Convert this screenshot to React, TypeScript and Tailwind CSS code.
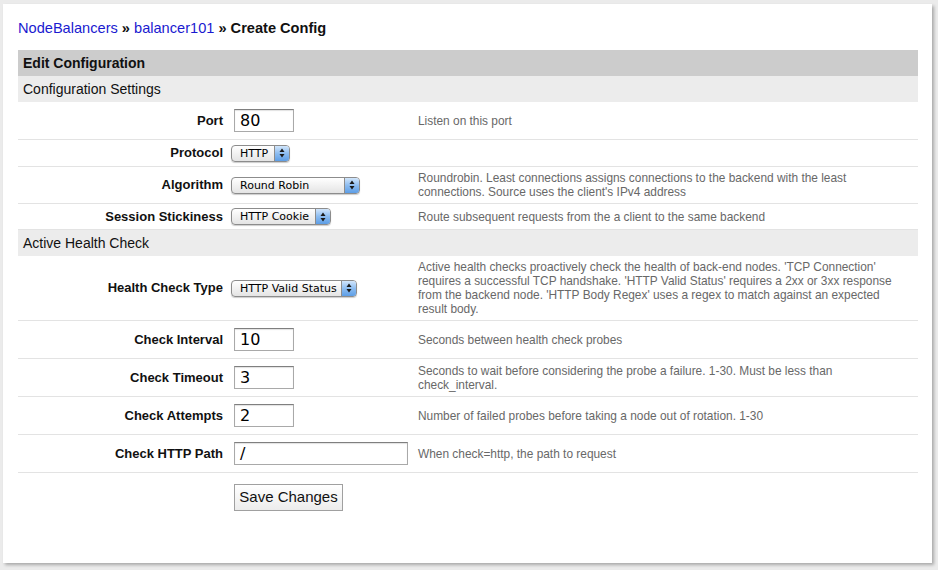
const sans = "font-['Liberation_Sans',Arial,sans-serif]";
const lucida = "font-['DejaVu_Sans','Liberation_Sans',sans-serif]";

function TextBox({ value, w }: { value: string; w: string }) {
  return (
    <div
      className={`${w} h-[23px] border border-[#a9a9a9] border-t-[#7f7f7f] bg-white pl-[5px] text-[16px] leading-[21px] text-black ${lucida} shadow-[inset_0_1px_1px_rgba(0,0,0,0.12)]`}
    >
      {value}
    </div>
  );
}

function Select({ value, w }: { value: string; w: string }) {
  return (
    <div
      className={`${w} -ml-[3px] h-[17px] flex rounded-[4px] border border-[#8c8c8c] bg-gradient-to-b from-white to-[#e4e4e4] shadow-[0_1px_1px_rgba(0,0,0,0.2)] overflow-hidden`}
    >
      <span className={`flex-1 pl-[8px] text-[11px] leading-[15px] text-black ${lucida}`}>{value}</span>
      <span className="w-[15px] border-l border-[#8c8c8c] bg-gradient-to-b from-[#d2e6fb] via-[#8cbcf0] to-[#5d9ee6] flex items-center justify-center">
        <svg width="6" height="10" viewBox="0 0 6 10">
          <path d="M3 0.5 L5.5 4 H0.5 Z" fill="#1a1a1a" />
          <path d="M3 9.5 L5.5 6 H0.5 Z" fill="#1a1a1a" />
        </svg>
      </span>
    </div>
  );
}

type RowProps = {
  label: string;
  h: string;
  field?: React.ReactNode;
  desc?: string;
};

function Row({ label, h, field, desc }: RowProps) {
  return (
    <div className={`flex items-center ${h} border-b border-[#e3e3e3]`}>
      <div className={`w-[205px] text-right text-[13px] font-bold text-[#111] ${sans}`}>{label}</div>
      <div className="w-[195px] pl-[11px] flex items-center">{field}</div>
      <div className={`flex-1 pr-[18px] text-[11.9px] leading-[14px] text-[#686868] ${sans}`}>{desc}</div>
    </div>
  );
}

function Section({ title }: { title: string }) {
  return (
    <div className={`h-[26px] flex items-center bg-[#ececec] pl-[5px] text-[14px] text-[#111] ${sans}`}>
      {title}
    </div>
  );
}

export default function App() {
  return (
    <div className="min-h-[570px] w-[938px] bg-[#ebebeb] pt-[4px] pl-[3px]">
      <div className="w-[929px] h-[559px] bg-white shadow-[2px_2px_3px_rgba(0,0,0,0.28)] pl-[15px] pr-[14px]">
        <div className={`h-[46px] pt-[15px] text-[14.6px] leading-[18px] ${sans}`}>
          <span className="text-[#1a1ad0]">NodeBalancers</span>
          <span className="font-bold text-[#111]"> » </span>
          <span className="text-[#1a1ad0]">balancer101</span>
          <span className="font-bold text-[#111]"> » Create Config</span>
        </div>

        <div className={`h-[26px] flex items-center bg-[#cccccc] pl-[5px] text-[14px] font-bold text-[#111] ${sans}`}>
          Edit Configuration
        </div>
        <Section title="Configuration Settings" />

        <Row label="Port" h="h-[38px]" field={<TextBox value="80" w="w-[60px]" />} desc="Listen on this port" />
        <Row label="Protocol" h="h-[27px]" field={<Select value="HTTP" w="w-[59px]" />} />
        <Row
          label="Algorithm"
          h="h-[37px]"
          field={<Select value="Round Robin" w="w-[129px]" />}
          desc="Roundrobin. Least connections assigns connections to the backend with the least connections. Source uses the client's IPv4 address"
        />
        <Row
          label="Session Stickiness"
          h="h-[26px]"
          field={<Select value="HTTP Cookie" w="w-[100px]" />}
          desc="Route subsequent requests from the a client to the same backend"
        />

        <Section title="Active Health Check" />

        <Row
          label="Health Check Type"
          h="h-[65px]"
          field={<Select value="HTTP Valid Status" w="w-[126px]" />}
          desc="Active health checks proactively check the health of back-end nodes. 'TCP Connection' requires a successful TCP handshake. 'HTTP Valid Status' requires a 2xx or 3xx response from the backend node. 'HTTP Body Regex' uses a regex to match against an expected result body."
        />
        <Row
          label="Check Interval"
          h="h-[38px]"
          field={<TextBox value="10" w="w-[60px]" />}
          desc="Seconds between health check probes"
        />
        <Row
          label="Check Timeout"
          h="h-[38px]"
          field={<TextBox value="3" w="w-[60px]" />}
          desc="Seconds to wait before considering the probe a failure. 1-30. Must be less than check_interval."
        />
        <Row
          label="Check Attempts"
          h="h-[38px]"
          field={<TextBox value="2" w="w-[60px]" />}
          desc="Number of failed probes before taking a node out of rotation. 1-30"
        />
        <Row
          label="Check HTTP Path"
          h="h-[38px]"
          field={<TextBox value="/" w="w-[174px]" />}
          desc="When check=http, the path to request"
        />

        <div className="pt-[11px] pl-[216px]">
          <button
            className={`w-[109px] h-[27px] border border-[#a0a0a0] bg-gradient-to-b from-white to-[#ececec] text-[15px] text-[#111] ${sans}`}
          >
            Save Changes
          </button>
        </div>
      </div>
    </div>
  );
}
